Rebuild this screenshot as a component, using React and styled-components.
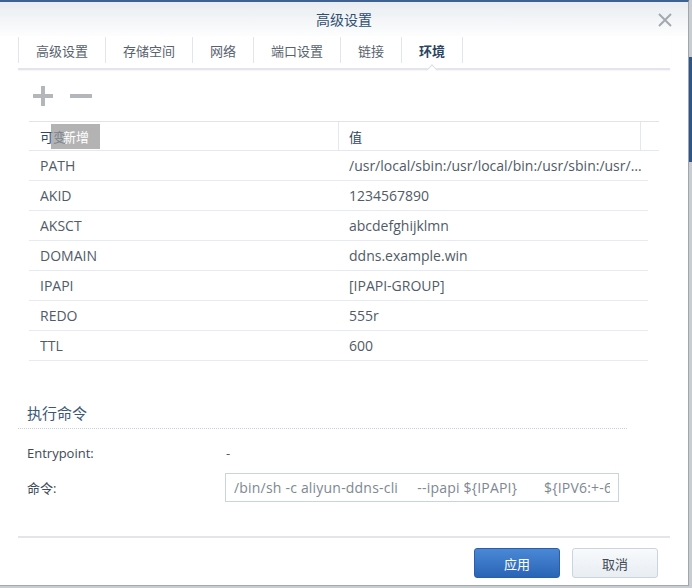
import React from 'react';
import styled, { createGlobalStyle } from 'styled-components';

// ── Global ───────────────────────────────────────────────────────────────────
const GlobalStyle = createGlobalStyle`
  * { box-sizing: border-box; }
  html, body {
    margin: 0;
    padding: 0;
    height: 588px;
    overflow: hidden;
    background: linear-gradient(#c9ccd0 0 57px, #2f5686 57px 162px, #c9ccd0 162px);
    font-family: "Open Sans", "Noto Sans CJK SC", sans-serif;
  }
`;

const FONT = `"Open Sans", "Noto Sans CJK SC", sans-serif`;

// ── Window frame ─────────────────────────────────────────────────────────────
const Window = styled.div`
  width: 689px;
  height: 586px;
  background: #fff;
  border-top: 2px solid #3d6190;
  border-right: 1px solid #9ea6af;
  border-bottom: 1px solid #a3a9b0;
  display: flex;
  flex-direction: column;
`;

const TitleBar = styled.div`
  height: 34px;
  flex-shrink: 0;
  position: relative;
  display: flex;
  align-items: center;
  justify-content: center;
  background: linear-gradient(#e8ecf1, #fdfdfe);
`;

const Title = styled.div`
  font-family: ${FONT};
  font-size: 14px;
  color: #2f4e72;
`;

const CloseBtn = styled.div`
  position: absolute;
  right: 16px;
  top: 11px;
  width: 14px;
  height: 14px;
  display: flex;
`;

const Body = styled.div`
  flex: 1;
  display: flex;
  flex-direction: column;
  padding: 0 18px;
`;

// ── Tabs ─────────────────────────────────────────────────────────────────────
const TabBar = styled.div`
  display: flex;
  height: 34px;
  border-bottom: 2px solid #e2e5e9;
  box-shadow: 0 1px 1px rgba(0, 0, 0, 0.03);
`;

const Tab = styled.div`
  position: relative;
  display: flex;
  align-items: center;
  padding: 0 17px;
  margin-top: 1px;
  height: 26px;
  border-left: 1px solid #e0e6ec;
  font-family: ${FONT};
  font-size: 13px;
  color: ${(p) => (p.$active ? '#2b4462' : '#58626e')};
  font-weight: ${(p) => (p.$active ? 700 : 400)};
  &:last-child { border-right: 1px solid #e0e6ec; }

  ${(p) =>
    p.$active &&
    `
    &::after {
      content: '';
      position: absolute;
      left: 50%;
      bottom: -11px;
      width: 7px;
      height: 7px;
      margin-left: -4px;
      background: #fff;
      border-left: 1px solid #dcdfe3;
      border-top: 1px solid #dcdfe3;
      transform: rotate(45deg);
    }
  `}
`;

// ── Toolbar ──────────────────────────────────────────────────────────────────
const Toolbar = styled.div`
  height: 51px;
  display: flex;
  align-items: center;
  gap: 17px;
  padding-left: 15px;
`;

const IconBtn = styled.div`
  position: relative;
  width: ${(p) => p.$w}px;
  height: 20px;
  display: flex;
  align-items: center;
  justify-content: center;
`;

const Tooltip = styled.div`
  position: absolute;
  left: 18px;
  top: 38px;
  width: 49px;
  height: 25px;
  padding-left: 12px;
  display: flex;
  align-items: center;
  background: rgba(150, 150, 150, 0.72);
  color: #fff;
  font-family: ${FONT};
  font-size: 13px;
  z-index: 2;
`;

// ── Table ────────────────────────────────────────────────────────────────────
const Table = styled.div`
  margin-left: 11px;
`;

const HeadRow = styled.div`
  display: grid;
  grid-template-columns: 310px 302px 18px;
  height: 30px;
  border-top: 1px solid #dde4ec;
  border-bottom: 1px solid #e4e9ef;
  width: 630px;
`;

const HeadCell = styled.div`
  display: flex;
  align-items: center;
  padding-left: ${(p) => p.$pad || 11}px;
  border-right: ${(p) => (p.$last ? 'none' : '1px solid #e1e8ef')};
  font-family: ${FONT};
  font-size: 13px;
  color: #2d4765;
`;

const Row = styled.div`
  display: grid;
  grid-template-columns: 310px 309px;
  width: 619px;
  height: 30px;
  border-bottom: 1px solid #e6ebf1;
`;

const Cell = styled.div`
  display: flex;
  align-items: center;
  padding: 0 5px 0 ${(p) => p.$pad}px;
  font-family: ${FONT};
  font-size: 14px;
  color: #505b67;
  min-width: 0;
  span {
    white-space: nowrap;
    overflow: hidden;
    text-overflow: ellipsis;
  }
`;

// ── Command section ──────────────────────────────────────────────────────────
const Section = styled.div`
  margin-top: 41px;
  width: 609px;
`;

const SectionTitle = styled.div`
  font-family: ${FONT};
  font-size: 15px;
  line-height: 22px;
  color: #3a5777;
  padding: 0 0 4px 9px;
  border-bottom: 1px dotted #c3d1de;
`;

const Form = styled.div`
  display: grid;
  grid-template-columns: 198px 394px;
  grid-auto-rows: auto;
  row-gap: 7px;
  padding: 11px 0 0 9px;
`;

const Label = styled.div`
  display: flex;
  align-items: center;
  height: ${(p) => p.$h}px;
  font-family: ${FONT};
  font-size: 13px;
  color: #3d4a58;
`;

const Value = styled.div`
  display: flex;
  align-items: center;
  padding-left: 1px;
  font-family: ${FONT};
  font-size: 13px;
  color: #505b67;
`;

const CmdInput = styled.input`
  width: 394px;
  height: 29px;
  border: 1px solid #c9d4df;
  padding: 0 8px;
  font-family: ${FONT};
  font-size: 14px;
  letter-spacing: 0.2px;
  color: #7e8892;
  background: #fff;
  outline: none;
  white-space: pre;
`;

// ── Footer ───────────────────────────────────────────────────────────────────
const Footer = styled.div`
  margin-top: auto;
  border-top: 2px solid #e2e5e9;
  display: flex;
  justify-content: flex-end;
  gap: 12px;
  padding: 10px 12px 7px 0;
`;

const Button = styled.button`
  width: 86px;
  height: 30px;
  border-radius: 3px;
  font-family: ${FONT};
  font-size: 13px;
  cursor: pointer;
  border: 1px solid ${(p) => (p.$primary ? '#2a5ea6' : '#cbd4de')};
  color: ${(p) => (p.$primary ? '#fff' : '#3f4a56')};
  background: ${(p) =>
    p.$primary
      ? 'linear-gradient(#4a88d6, #2a65b5)'
      : 'linear-gradient(#f8fafc, #e8edf2)'};
`;

// ── Data ─────────────────────────────────────────────────────────────────────
const tabs = ['高级设置', '存储空间', '网络', '端口设置', '链接', '环境'];

const env = [
  ['PATH', '/usr/local/sbin:/usr/local/bin:/usr/sbin:/usr/bin:/sbin:/bin'],
  ['AKID', '1234567890'],
  ['AKSCT', 'abcdefghijklmn'],
  ['DOMAIN', 'ddns.example.win'],
  ['IPAPI', '[IPAPI-GROUP]'],
  ['REDO', '555r'],
  ['TTL', '600'],
];

const cmd = '/bin/sh -c aliyun-ddns-cli     --ipapi ${IPAPI}       ${IPV6:+-6} --domain ${DOMAIN}';

// ── Component ────────────────────────────────────────────────────────────────
export default function App() {
  return (
    <>
      <GlobalStyle />
      <Window>
        <TitleBar>
          <Title>高级设置</Title>
          <CloseBtn>
            <svg width="14" height="14" viewBox="0 0 14 14">
              <path d="M1 1L13 13M13 1L1 13" stroke="#a3a9af" strokeWidth="2" />
            </svg>
          </CloseBtn>
        </TitleBar>

        <Body>
          <TabBar>
            {tabs.map((t, i) => (
              <Tab key={t} $active={i === tabs.length - 1}>{t}</Tab>
            ))}
          </TabBar>

          <Toolbar>
            <IconBtn $w={20}>
              <svg width="20" height="20" viewBox="0 0 20 20">
                <path d="M10 0V20M0 10H20" stroke="#b3b7bc" strokeWidth="4" />
              </svg>
              <Tooltip>新增</Tooltip>
            </IconBtn>
            <IconBtn $w={22}>
              <svg width="22" height="20" viewBox="0 0 22 20">
                <path d="M0 10H22" stroke="#b3b7bc" strokeWidth="4" />
              </svg>
            </IconBtn>
          </Toolbar>

          <Table>
            <HeadRow>
              <HeadCell>可变</HeadCell>
              <HeadCell $pad={10}>值</HeadCell>
              <HeadCell $last />
            </HeadRow>
            {env.map(([k, v]) => (
              <Row key={k}>
                <Cell $pad={11}><span>{k}</span></Cell>
                <Cell $pad={10}><span>{v}</span></Cell>
              </Row>
            ))}
          </Table>

          <Section>
            <SectionTitle>执行命令</SectionTitle>
            <Form>
              <Label $h={26}>Entrypoint:</Label>
              <Value>-</Value>
              <Label $h={29}>命令:</Label>
              <CmdInput readOnly value={cmd} />
            </Form>
          </Section>

          <Footer>
            <Button $primary>应用</Button>
            <Button>取消</Button>
          </Footer>
        </Body>
      </Window>
    </>
  );
}
